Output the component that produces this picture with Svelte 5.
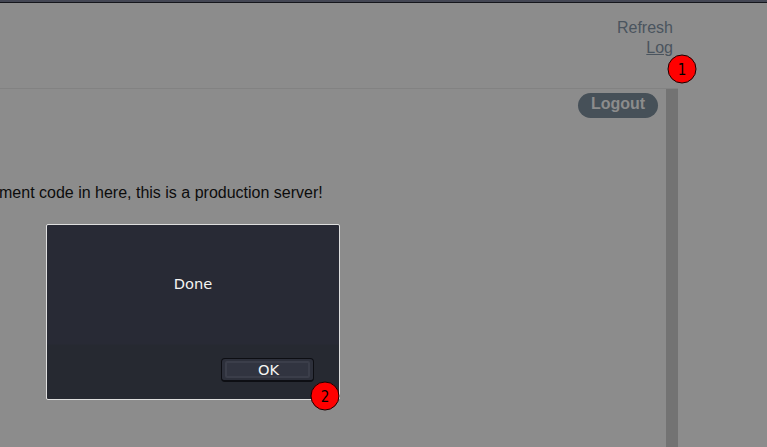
<script>
  const links = [
    { label: 'Refresh', active: false },
    { label: 'Log', active: true },
  ];
  const markers = [
    { n: 1, x: 682, y: 69 },
    { n: 2, x: 325, y: 396 },
  ];
</script>

<div class="page">
  <div class="edge"></div>
  <header>
    <nav>
      {#each links as link}
        <a class:active={link.active}>{link.label}</a>
      {/each}
    </nav>
  </header>
  <main>
    <section>
      <div class="bar"><button class="logout">Logout</button></div>
      <p>ment code in here, this is a production server!</p>
    </section>
    <div class="scrollbar"></div>
  </main>

  <div class="dialog">
    <div class="message">Done</div>
    <div class="actions"><button class="ok"><span>OK</span></button></div>
  </div>

  <svg class="markers" width="767" height="447" viewBox="0 0 767 447">
    {#each markers as m}
      <circle cx={m.x} cy={m.y} r="14" />
      <text x={m.x} y={m.y + 6}>{m.n}</text>
    {/each}
  </svg>
</div>

<style>
  :global(body) { margin: 0; overflow: hidden; }
  .page {
    position: relative;
    width: 767px;
    height: 447px;
    box-sizing: border-box;
    overflow: hidden;
    background: #8c8c8c;
    border-top: 2px solid #444754;
    font: 16px/20px "Liberation Sans", Arial, sans-serif;
    color: #0c0c0c;
  }
  .edge { height: 1px; background: #15161c; }
  header {
    box-sizing: border-box;
    width: 678px;
    height: 86px;
    padding: 15px 5px 0 0;
    border-bottom: 1px solid #828282;
  }
  nav { display: flex; flex-direction: column; align-items: flex-end; }
  a { color: #4a545e; }
  .active { text-decoration: underline; }
  main { display: flex; width: 678px; height: 358px; }
  section { flex: 1; }
  .bar { display: flex; justify-content: flex-end; padding: 4px 8px 0 0; }
  .logout {
    width: 80px;
    height: 25px;
    padding: 0 0 4px;
    border: 0;
    border-radius: 13px;
    background: #465058;
    color: #8c8c8c;
    font: bold 16px/20px "Liberation Sans", Arial, sans-serif;
  }
  p { margin: 65px 0 0 -1px; white-space: nowrap; }
  .scrollbar { width: 12px; background: #737373; }
  .dialog {
    position: absolute;
    left: 46px;
    top: 222px;
    display: flex;
    flex-direction: column;
    box-sizing: border-box;
    width: 294px;
    height: 176px;
    border: 1px solid #dedede;
    border-radius: 2px;
    background: linear-gradient(#282a35 0, #282a35 119px, #262931 120px, #262931 100%);
    color: #f5f5f2;
    font: 14.67px/18px "DejaVu Sans", sans-serif;
  }
  .message { height: 118px; line-height: 118px; text-align: center; }
  .actions { display: flex; justify-content: flex-end; padding: 15px 25px 0 0; }
  .ok {
    box-sizing: border-box;
    width: 93px;
    height: 24px;
    padding: 3px;
    border: 1px solid #0d0e13;
    border-bottom-width: 2px;
    border-radius: 4px;
    background: #2d303b;
    color: inherit;
    font: 14.67px/15px "DejaVu Sans", sans-serif;
  }
  .ok span {
    display: block;
    box-sizing: border-box;
    height: 17px;
    margin-top: -1px;
    padding-left: 2px;
    border: 2px solid #3b3e4a;
    border-radius: 2px;
    background: #313440;
    line-height: 13px;
  }
  .markers { position: absolute; left: 0; top: -2px; }
  circle { fill: #f00; stroke: #1a0000; stroke-width: 1; }
  text {
    fill: #000;
    font: 15px "DejaVu Sans Condensed", "DejaVu Sans", sans-serif;
    text-anchor: middle;
  }
</style>
